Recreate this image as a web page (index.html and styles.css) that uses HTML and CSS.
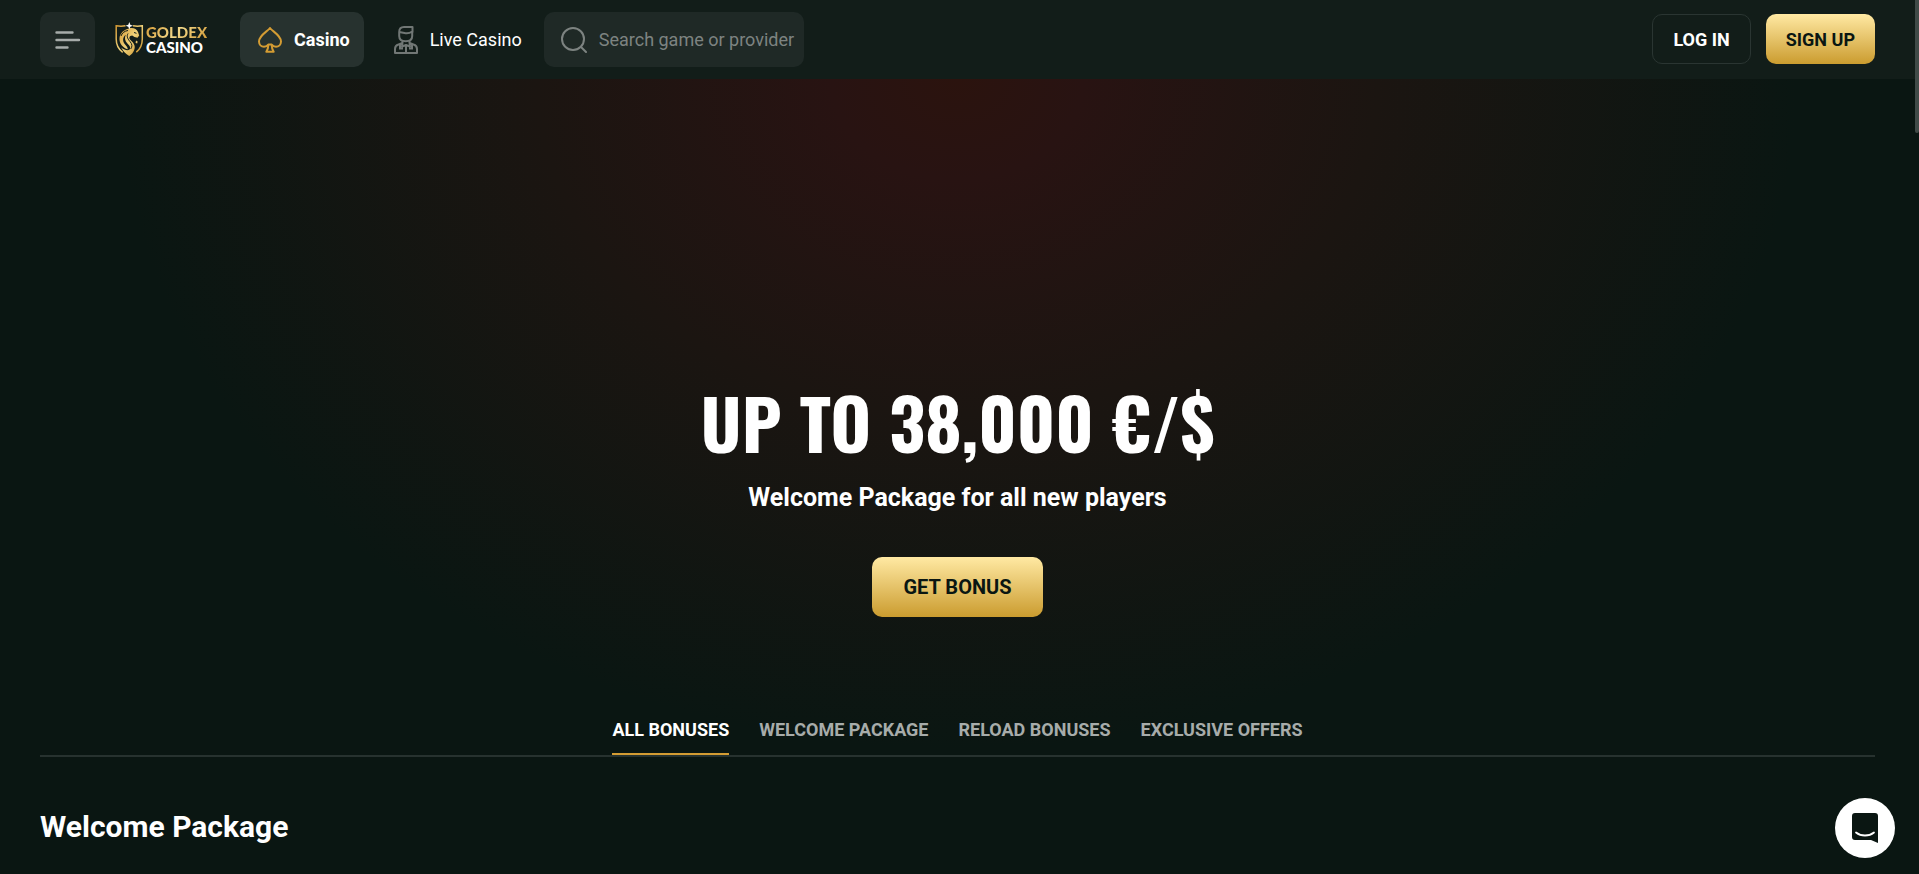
FILE: index.html
```html
<!DOCTYPE html>
<html lang="en">
<head>
    <meta charset="UTF-8">
    <meta name="viewport" content="width=device-width, initial-scale=1.0">
    <title>Goldex Casino - Bonuses</title>
    <link rel="stylesheet" href="styles.css">
</head>
<body>
    <header class="header">
        <button class="menu-btn" type="button" aria-label="Menu">
            <svg width="26" height="20" viewBox="0 0 26 20" fill="none" stroke="currentColor" stroke-width="2.400" stroke-linecap="round">
                <path d="M1.500 2.500h16M1.500 10h22.500M1.500 17.500h11"/>
            </svg>
        </button>

        <a class="logo" href="#">
            <svg class="logo-shield" width="29" height="35" viewBox="0 0 29 35" fill="none">
                <defs>
                    <linearGradient id="gold" x1="0" y1="0" x2="1" y2="1">
                        <stop offset="0" stop-color="#d39a35"/>
                        <stop offset="0.5" stop-color="#f0d27a"/>
                        <stop offset="1" stop-color="#c8902b"/>
                    </linearGradient>
                </defs>
                <path d="M10.500 3.800C7 4.500 4 4.300 1.200 3.800V17c0 6.500 2.600 10.500 6.500 13.300M18 3.800c3.500.7 6.500.5 9.300 0V17c0 6.500-2.600 10.500-6 13.200" stroke="url(#gold)" stroke-width="1.500"/>
                <path d="M14 6.500c4-1.200 7.500.3 9 3.500l1.200 3.500-1.700 2.200-3-.7-2.300-1.500c-3 .2-3.700 2.600-1.500 4.800 3.500 3.200 5 6 3.500 9.700-.9 2.500-2.700 4.500-5 6-3.500-2.300-6.500-5-8-8.500 3 2.300 6 3.500 8 2.300 2-1.300.8-3.800-1.800-6.300-2.500-2.500-3.200-5.600-1.600-8.700-3.500 2.700-3.400 6.800-.5 10 1.500 1.700 2.500 3 2.500 4.500C8 26 4 21.500 4.500 16c.4-4.800 4.500-8.500 9.500-9.500z" fill="url(#gold)"/>
                <path d="M6 14c1-3 3.500-5 7-5.500M13 11.500c-1.800 3 0 5.800 2.200 8.300 2 2.300 2.300 5 .5 7.200M19 10.500l2.500.8M17.500 17l3 1.500 1.800-.5" stroke="#121d19"/>
                <path d="M21.500 18.500l1.200 1.200-.6 2-1.800-1.500z" fill="url(#gold)"/>
                <path d="M14.300 0l1 2.800 2.700 1-2.700 1-1 2.700-1-2.700-2.700-1 2.700-1z" fill="#fff"/>
            </svg>
            <span class="logo-text">
                <span class="logo-gold">GOLDEX</span>
                <span>CASINO</span>
            </span>
        </a>

        <nav class="nav">
            <a class="nav-link active" href="#">
                <svg width="24" height="26" viewBox="0 0 24 26" fill="none" stroke="currentColor" stroke-width="2" stroke-linejoin="round">
                    <path d="M12 1C9.500 4.500 1 8.300 1 14.500c0 3 2.300 5.200 5 5.200 2 0 3.600-1 4.300-2.200h3.400c.7 1.200 2.300 2.200 4.300 2.200 2.700 0 5-2.200 5-5.200C23 8.300 14.500 4.500 12 1z"/>
                    <path d="M10.300 18c0 2.800-.7 5-2 6.800h7.400c-1.300-1.800-2-4-2-6.800"/>
                </svg>
                Casino
            </a>
            <a class="nav-link" href="#">
                <svg class="dealer" width="24" height="28" viewBox="0 0 24 28" fill="none" stroke="currentColor" stroke-width="2" stroke-linejoin="round">
                    <path d="M5.200 6C5.200 3 7 1 10 1h8.500v5.500M5.200 6v4c0 3.200 2.600 5.200 6.500 5.200s6.500-2 6.500-5.200V5.500C16 7 13 7.500 10.500 7L5.200 6z"/>
                    <path d="M8.500 14.500V17l-4 1.500C2 19.300 1 20.500 1 23v4h22v-4c0-2.500-1-3.700-3.500-4.500l-4-1.500v-2.500M12 20v7M5 22.500h4M15 22.500h4M6 18v4.500M18 18v4.500M8.500 16.500L8 20.500l4-1.500 4 1.500-.5-4"/>
                </svg>
                Live Casino
            </a>
        </nav>

        <label class="search">
            <svg width="26" height="26" viewBox="0 0 26 26" fill="none" stroke="currentColor" stroke-width="2" stroke-linecap="round">
                <circle cx="12" cy="12" r="11"/>
                <path d="M20 20l5 5"/>
            </svg>
            <input type="text" placeholder="Search game or provider" aria-label="Search game or provider">
        </label>

        <div class="auth">
            <button class="btn btn-outline" type="button">LOG IN</button>
            <button class="btn btn-gold" type="button">SIGN UP</button>
        </div>
    </header>

    <main class="main">
        <section class="hero">
            <h1 class="hero-title">UP TO 38,000 €/$</h1>
            <p class="hero-subtitle">Welcome Package for all new players</p>
            <button class="btn btn-gold btn-large" type="button">GET BONUS</button>
        </section>

        <nav class="tabs">
            <a class="tab active" href="#">ALL BONUSES</a>
            <a class="tab" href="#">WELCOME PACKAGE</a>
            <a class="tab" href="#">RELOAD BONUSES</a>
            <a class="tab" href="#">EXCLUSIVE OFFERS</a>
        </nav>

        <h2 class="section-title">Welcome Package</h2>
    </main>

    <button class="chat-btn" type="button" aria-label="Open chat">
        <svg width="28" height="32" viewBox="0 0 28 32">
            <path d="M4 1h20a3 3 0 0 1 3 3v27l-7-3H4a3 3 0 0 1-3-3V4a3 3 0 0 1 3-3z" fill="#0a1612"/>
            <path d="M5 20.500c5 4 13 4 18 0" fill="none" stroke="#fff" stroke-width="1.800" stroke-linecap="round"/>
        </svg>
    </button>
    <div class="scroll-thumb"></div>
</body>
</html>
```

FILE: styles.css
```css
* {
    box-sizing: border-box;
}

body {
    margin: 0;
    padding-right: 4px;
    min-height: 100vh;
    overflow-x: hidden;
    background-color: #0a1612;
    color: #fff;
    font-family: Roboto, "Liberation Sans", sans-serif;
    font-size: 18px;
}

a {
    color: inherit;
    text-decoration: none;
}

button {
    font-family: inherit;
    cursor: pointer;
}

/* Header */
.header {
    display: flex;
    align-items: center;
    height: 79px;
    padding: 0 40px;
    background-color: #121d19;
}

.menu-btn {
    display: flex;
    align-items: center;
    justify-content: center;
    width: 55px;
    height: 55px;
    border: none;
    border-radius: 10px;
    background-color: #1f2926;
    color: #a7acaa;
}

.logo {
    display: flex;
    align-items: center;
    gap: 2px;
    width: 125px;
    margin-left: 20px;
}

.logo-text {
    display: flex;
    flex-direction: column;
    font-family: Lato, sans-serif;
    font-size: 15px;
    font-weight: 900;
    line-height: 15px;
}

.logo-gold {
    background: linear-gradient(135deg, #d39a35, #f3d98a 50%, #d39a35);
    -webkit-background-clip: text;
    background-clip: text;
    color: transparent;
}

.nav {
    display: flex;
    gap: 12px;
}

.nav-link {
    display: flex;
    align-items: center;
    gap: 12px;
    height: 55px;
    padding: 0 14px 0 18px;
    border-radius: 10px;
}

.nav-link.active {
    background-color: #27322f;
    font-weight: 700;
}

.nav-link.active svg {
    color: #d49c33;
}

.dealer {
    color: #717775;
}

.search {
    display: flex;
    align-items: center;
    gap: 12px;
    width: 260px;
    height: 55px;
    margin-left: 8px;
    padding: 0 8px 0 17px;
    border-radius: 10px;
    background-color: #1f2926;
    color: #7d8381;
}

.search svg {
    flex-shrink: 0;
}

.search input {
    width: 100%;
    min-width: 0;
    padding: 0;
    border: none;
    outline: none;
    background: none;
    color: #fff;
    font-family: inherit;
    font-size: 18px;
}

.search input::placeholder {
    color: #7d8381;
}

.auth {
    display: flex;
    gap: 15px;
    margin-left: auto;
    padding-bottom: 1px;
}

.btn {
    height: 50px;
    padding: 0 20px;
    border: none;
    border-radius: 10px;
    font-size: 18px;
    font-weight: 700;
    white-space: nowrap;
}

.btn-outline {
    border: 1px solid #2a3532;
    background: none;
    color: #fff;
}

.btn-gold {
    background: linear-gradient(180deg, #ffe9a3, #cb9c2f);
    color: #0a1612;
}

.btn-large {
    height: 60px;
    padding: 0 31px;
    font-size: 20px;
}

/* Hero */
.main {
    padding: 0 40px;
    background: radial-gradient(840px 670px at 50% 0, #2b130e 0, #281312 15%, #1b1511 50%, #0a1612 100%);
}

.hero {
    display: flex;
    flex-direction: column;
    align-items: center;
    padding-top: 300px;
}

.hero-title {
    margin: 0;
    font-family: Oswald, "Roboto Condensed", Roboto, sans-serif;
    font-size: 70px;
    font-weight: 700;
    line-height: 84px;
}

.hero-subtitle {
    margin: 19px 0 43px;
    font-size: 25px;
    font-weight: 700;
    line-height: 32px;
}

/* Tabs */
.tabs {
    display: flex;
    justify-content: center;
    gap: 30px;
    margin-top: 92px;
    border-bottom: 2px solid #27322f;
}

.tab {
    padding: 11px 0 13px;
    border-bottom: 2px solid transparent;
    color: #a7acaa;
    font-weight: 700;
    line-height: 20px;
}

.tab.active {
    border-color: #d49c33;
    color: #fff;
}

.section-title {
    margin: 0;
    padding: 50px 0 28px;
    font-size: 30px;
    font-weight: 700;
    line-height: 39px;
}

.chat-btn {
    position: fixed;
    right: 24px;
    bottom: 16px;
    display: flex;
    align-items: center;
    justify-content: center;
    width: 60px;
    height: 60px;
    padding: 0;
    border: none;
    border-radius: 50%;
    background-color: #fff;
}

.scroll-thumb {
    position: fixed;
    top: 0;
    right: 0;
    width: 4px;
    height: 133px;
    border-radius: 0 0 4px 4px;
    background-color: #414b48;
}
```
